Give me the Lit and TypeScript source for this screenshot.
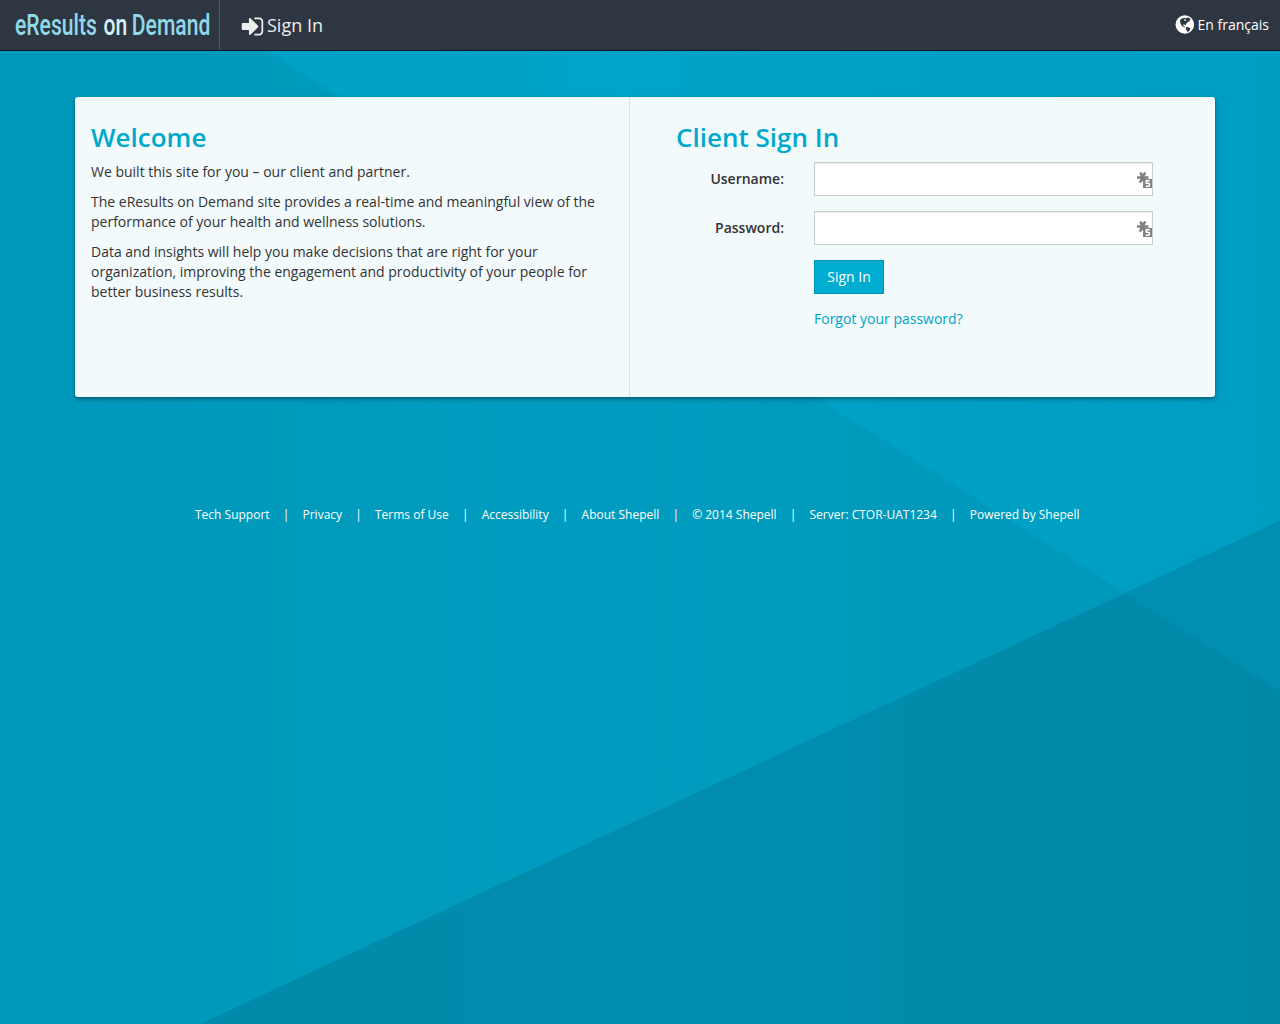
import { LitElement, html, css, svg } from "lit";
import { customElement } from "lit/decorators.js";

const FOOTER_ITEMS = [
  "Tech Support",
  "Privacy",
  "Terms of Use",
  "Accessibility",
  "About Shepell",
  "© 2014 Shepell",
  "Server: CTOR-UAT1234",
  "Powered by Shepell",
];

const asterisk = svg`<svg class="hint" width="15" height="16" viewBox="0 0 15 16" aria-hidden="true">
  <path d="M5.5 5.5 3.5 .5M5.5 5.5 8.2 .5M5.5 5.5H0M5.5 5.5H11.5M5.5 5.5 3 10.6M5.5 5.5 8 10" stroke="#808080" stroke-width="2.6" fill="none"/>
  <rect x="6" y="7" width="9" height="9" fill="#808080"/>
  <path d="M12.8 8.8H9.3V11.2H11.2Q12.6 11.2 12.6 12.7T11 14.2H8.6" stroke="#fff" stroke-width="1.5" fill="none"/>
</svg>`;

@customElement("app-root")
export class AppRoot extends LitElement {
  static styles = css`
    :host {
      display: block;
      font-family: "Open Sans", sans-serif;
      font-size: 14px;
      line-height: 20px;
      color: #333;
    }
    * { box-sizing: border-box; }
    .page {
      position: relative;
      height: 1024px;
      overflow: hidden;
      display: flex;
      flex-direction: column;
    }
    .backdrop { position: absolute; inset: 0; z-index: -1; }
    .navbar {
      height: 51px;
      flex: none;
      display: flex;
      background: #2e3741;
      border-bottom: 1px solid #12181d;
      color: #fff;
    }
    .brand {
      width: 220px;
      height: 50px;
      padding-left: 15px;
      border-right: 1px solid #50575f;
      font: 500 30px/50px Roboto, sans-serif;
      color: #8fd9ea;
    }
    .wordmark {
      display: inline-block;
      white-space: nowrap;
      transform: scaleX(0.704);
      transform-origin: left;
    }
    .wordmark-on { margin: 0 -1px 0 2px; color: #d5f1f7; }
    .signin {
      display: flex;
      align-items: center;
      padding-left: 20px;
      font-size: 18px;
      color: #eee;
    }
    .signin svg { margin: 3px 2px 0 0; }
    .language {
      margin-left: auto;
      padding-right: 11px;
      display: flex;
      align-items: center;
      gap: 3px;
    }
    .language svg { margin-top: -1px; }
    .card {
      flex: none;
      width: 1140px;
      height: 300px;
      margin: 46px 0 0 75px;
      display: flex;
      background: #f2fafc;
      border-radius: 3px;
      box-shadow: 0 2px 4px rgba(0, 0, 0, 0.4);
    }
    .welcome {
      width: 555px;
      padding: 26px 24px 0 16px;
      border-right: 1px solid #dbe4e7;
    }
    h2 {
      margin: 0 0 10px;
      font-size: 26px;
      line-height: 29px;
      font-weight: 600;
      color: #00a9cc;
    }
    p { margin: 0 0 10px; }
    .login { padding: 26px 0 0 46px; }
    .form {
      display: grid;
      grid-template-columns: 108px 339px;
      column-gap: 30px;
      row-gap: 15px;
    }
    .label { text-align: right; font-weight: 600; line-height: 34px; }
    .field {
      height: 34px;
      display: flex;
      justify-content: flex-end;
      align-items: center;
      background: #fff;
      border: 1px solid #ccc;
      box-shadow: inset 0 1px 1px rgba(0, 0, 0, 0.075);
    }
    .hint { margin-top: 2px; }
    .actions { grid-column: 2; }
    .button {
      display: block;
      width: 70px;
      height: 34px;
      padding: 0;
      border: 1px solid #0095b3;
      background: #00acd0;
      color: #fff;
      font: inherit;
    }
    .forgot { display: inline-block; margin-top: 15px; color: #00a4c8; text-decoration: none; }
    .footer {
      display: flex;
      margin: 108px 0 0 195px;
      font-size: 12px;
      line-height: 20px;
      color: #fff;
      white-space: nowrap;
    }
    .divider { width: 32.9px; text-align: center; }
  `;

  render() {
    return html`
      <div class="page">
        <svg class="backdrop" width="1280" height="1024" viewBox="0 0 1280 1024" aria-hidden="true">
          <defs>
            <linearGradient id="base"><stop offset="0" stop-color="#0098ba"/><stop offset=".45" stop-color="#009cbf"/><stop offset="1" stop-color="#0097b9"/></linearGradient>
            <linearGradient id="light"><stop offset="0" stop-color="#00a0c5"/><stop offset=".4" stop-color="#00a3c9"/><stop offset="1" stop-color="#009dc2"/></linearGradient>
            <linearGradient id="dark"><stop offset="0" stop-color="#008aaa"/><stop offset=".5" stop-color="#008dad"/><stop offset="1" stop-color="#0088a7"/></linearGradient>
          </defs>
          <rect width="1280" height="1024" fill="url(#base)"/>
          <path d="M186 0H1280V691L267 51Z" fill="url(#light)"/>
          <path d="M200 1024 1280 521V1024Z" fill="url(#dark)"/>
          <path d="M1124 593.5 1280 521V691Z" fill="#008fb1"/>
        </svg>
        <header class="navbar">
          <div class="brand">
            <span class="wordmark">eResults <span class="wordmark-on">on</span> Demand</span>
          </div>
          <div class="signin">
            <svg width="25" height="25" viewBox="0 0 1792 1792" fill="#eee" aria-hidden="true">
              <path d="M1312 896q0 26-19 45l-544 544q-19 19-45 19t-45-19-19-45v-288h-448q-26 0-45-19t-19-45v-384q0-26 19-45t45-19h448v-288q0-26 19-45t45-19 45 19l544 544q19 19 19 45zm352-352v704q0 119-84.5 203.5t-203.5 84.5h-320q-13 0-22.5-9.5t-9.5-22.5q0-4-1-20t-.5-26.5 3-23.5 10-19.5 20.5-6.5h320q66 0 113-47t47-113v-704q0-66-47-113t-113-47h-312l-11.5-1-11.5-3-8-5.5-7-9-2-13.5q0-4-1-20t-.5-26.5 3-23.5 10-19.5 20.5-6.5h320q119 0 203.5 84.5t84.5 203.5z"/>
            </svg>
            <span>Sign In</span>
          </div>
          <div class="language">
            <svg width="20" height="19" viewBox="0 0 20 19" aria-hidden="true">
              <circle cx="9.8" cy="9.5" r="9.3" fill="#fff"/>
              <path d="M7 3.4 9.4 2.8 11.4 3.4 12.2 2.2 14.6 3.2 15.8 4.8 14.4 5.2 15 6.6 13.2 6.4 12.4 7.8 11.2 8.6 10.8 10.6 9.6 9.6 8 9.8 8.6 11.2 10.2 11.8 9.6 12.4 7.4 11.4 5.6 8.8 5 6.4 5.4 4.6Z M11 12.2 13 12 15.4 13.6 14.6 15.4 12.6 17.2 11.8 15.4 10.8 14Z" fill="#2e3741"/>
              <path d="M8.6 4.4 10.4 4.2 11.4 5.4 10 6Z" fill="#fff"/>
            </svg>
            <span>En français</span>
          </div>
        </header>
        <main class="card">
          <section class="welcome">
            <h2>Welcome</h2>
            <p>We built this site for you – our client and partner.</p>
            <p>The eResults on Demand site provides a real-time and meaningful view of the performance of your health and wellness solutions.</p>
            <p>Data and insights will help you make decisions that are right for your organization, improving the engagement and productivity of your people for better business results.</p>
          </section>
          <section class="login">
            <h2>Client Sign In</h2>
            <div class="form">
              <div class="label">Username:</div>
              <div class="field">${asterisk}</div>
              <div class="label">Password:</div>
              <div class="field">${asterisk}</div>
              <div class="actions">
                <button class="button">Sign In</button>
                <a class="forgot">Forgot your password?</a>
              </div>
            </div>
          </section>
        </main>
        <footer class="footer">
          ${FOOTER_ITEMS.map((item, i) => html`${i ? html`<span class="divider">|</span>` : ""}<span>${item}</span>`)}
        </footer>
      </div>
    `;
  }
}
